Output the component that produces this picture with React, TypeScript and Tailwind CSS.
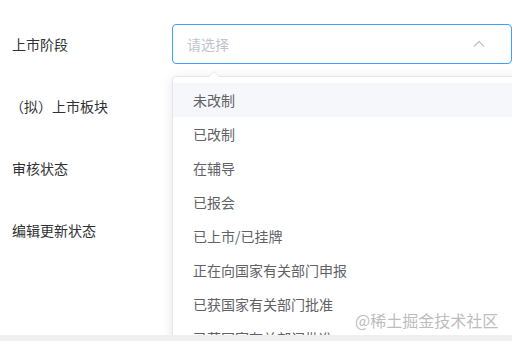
import React from "react";

const options = [
  "未改制",
  "已改制",
  "在辅导",
  "已报会",
  "已上市/已挂牌",
  "正在向国家有关部门申报",
  "已获国家有关部门批准",
  "已获国家有关部门批准",
];

export default function App() {
  return (
    <div className="relative w-[512px] h-[341px] overflow-hidden bg-white font-['Noto_Sans_CJK_SC',sans-serif]">
      <div className="relative h-[335px] overflow-hidden">
        <div className="pt-6 flex flex-col gap-[22px]">
          <div className="flex items-center h-10">
            <div className="w-[172px] pl-3 text-sm text-[#303133]">上市阶段</div>
            <div className="flex-1 h-10 border border-[#409eff] rounded-[4px] flex items-center justify-between pl-[14px] pr-[26px]">
              <span className="text-sm text-[#c0c4cc]">请选择</span>
              <svg width="12" height="8" viewBox="0 0 12 8" fill="none">
                <path d="M1 6.5 L6 1.5 L11 6.5" stroke="#c0c4cc" strokeWidth="1.3" />
              </svg>
            </div>
          </div>
          <div className="flex items-center h-10">
            <div className="w-[172px] pl-[10px] text-sm text-[#303133]">（拟）上市板块</div>
          </div>
          <div className="flex items-center h-10">
            <div className="w-[172px] pl-3 text-sm text-[#303133]">审核状态</div>
          </div>
          <div className="flex items-center h-10">
            <div className="w-[172px] pl-3 text-sm text-[#303133]">编辑更新状态</div>
          </div>
        </div>

        <div className="absolute left-[172px] top-[76px] w-[360px] bg-white border border-[#e4e7ed] rounded-[4px] shadow-[0_2px_12px_0_rgba(0,0,0,0.1)] py-1.5">
          <div className="absolute -top-[6px] left-[35px] w-0 h-0 border-l-[6px] border-r-[6px] border-b-[6px] border-l-transparent border-r-transparent border-b-[#e4e7ed]" />
          <div className="absolute -top-[5px] left-[35px] w-0 h-0 border-l-[6px] border-r-[6px] border-b-[6px] border-l-transparent border-r-transparent border-b-white" />
          {options.map((o, i) => (
            <div
              key={i}
              className={`h-[34px] flex items-center pl-5 text-sm text-[#606266] ${i === 0 ? "bg-[#f5f7fa]" : ""}`}
            >
              {o}
            </div>
          ))}
        </div>

        <div className="absolute left-[355px] top-[309px] text-base text-[#bdbdbd] whitespace-nowrap leading-[22px]">
          @稀土掘金技术社区
        </div>
      </div>
      <div className="h-[6px] bg-[#f0f0f3]" />
    </div>
  );
}
